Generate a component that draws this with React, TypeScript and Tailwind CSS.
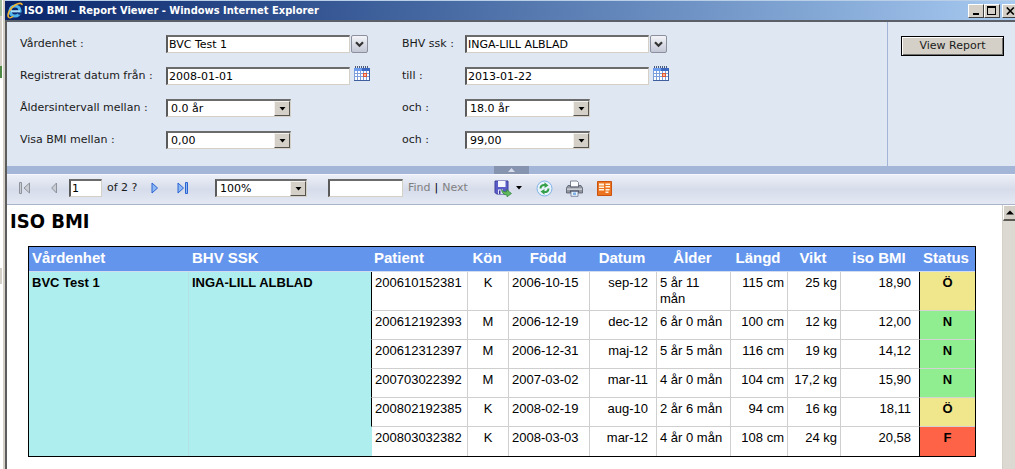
import React, { useState } from "react";

const ui = "font-['DejaVu_Sans',Verdana,sans-serif] text-[11px] leading-[14px] text-[#1a1a1a]";
const sunken =
  "border border-t-2 border-l-2 border-t-[#6b6b6b] border-l-[#5a5a5a] border-r-[#d4d0c8] border-b-[#d4d0c8] bg-white";

type Row = {
  patient: string;
  sex: string;
  born: string;
  date: string;
  age: string;
  length: string;
  weight: string;
  bmi: string;
  status: string;
};

const rows: Row[] = [
  { patient: "200610152381", sex: "K", born: "2006-10-15", date: "sep-12", age: "5 år 11 mån", length: "115 cm", weight: "25 kg", bmi: "18,90", status: "Ö" },
  { patient: "200612192393", sex: "M", born: "2006-12-19", date: "dec-12", age: "6 år 0 mån", length: "100 cm", weight: "12 kg", bmi: "12,00", status: "N" },
  { patient: "200612312397", sex: "M", born: "2006-12-31", date: "maj-12", age: "5 år 5 mån", length: "116 cm", weight: "19 kg", bmi: "14,12", status: "N" },
  { patient: "200703022392", sex: "M", born: "2007-03-02", date: "mar-11", age: "4 år 0 mån", length: "104 cm", weight: "17,2 kg", bmi: "15,90", status: "N" },
  { patient: "200802192385", sex: "K", born: "2008-02-19", date: "aug-10", age: "2 år 6 mån", length: "94 cm", weight: "16 kg", bmi: "18,11", status: "Ö" },
  { patient: "200803032382", sex: "K", born: "2008-03-03", date: "mar-12", age: "4 år 0 mån", length: "108 cm", weight: "24 kg", bmi: "20,58", status: "F" },
];

const statusColor: Record<string, string> = {
  "Ö": "bg-[#f0e68c]",
  N: "bg-[#90ee90]",
  F: "bg-[#ff6347]",
};

function IeLogo() {
  return (
    <svg width="17" height="17" viewBox="0 0 17 17" aria-hidden="true">
      <circle cx="9" cy="9" r="5" fill="none" stroke="#4fb4ee" strokeWidth="3.2" />
      <path d="M5 9.300h9" stroke="#a5dffc" strokeWidth="2.200" />
      <path d="M11 10.600h5v2.400l-3.600-.4z" fill="#16327a" />
      <path d="M2.800 15.500C.5 13 3.800 6 9.500 2.800 13 .8 16.300.8 16 3.200" fill="none" stroke="#f2b632" strokeWidth="1.600" />
      <path d="M2.800 15.500c1 .7 3 0 4.500-1.200" fill="none" stroke="#f2b632" strokeWidth="1.400" />
    </svg>
  );
}

function CalendarIcon() {
  return (
    <svg width="16" height="16" viewBox="0 0 16 16" shapeRendering="crispEdges" aria-hidden="true">
      <path d="M1 0h1v2H1zM3 0h1v2H3zM5 0h1v2H5zM7 0h1v2H7zM9 0h1v2H9zM11 0h1v2h-1zM13 0h1v2h-1z" fill="#4b5a78" />
      <path d="M0 2h16v13H0z" fill="#7d9fdb" />
      <path d="M0 2h16v3H0z" fill="#6d9bee" />
      <path d="M8 2h8v3H8z" fill="#3d68c2" />
      <path d="M1 5h2v2H1zM4 5h2v2H4zM7 5h2v2H7zM10 5h2v2h-2zM13 5h2v2h-2zM1 8h2v2H1zM4 8h2v2H4zM7 8h2v2H7zM13 8h2v2h-2zM1 11h2v3H1zM4 11h2v3H4zM7 11h2v3H7zM10 11h2v3h-2zM13 11h2v3h-2z" fill="#fff" />
      <path d="M9 7h4v4H9z" fill="#e2552d" />
      <path d="M10 8h2v2h-2z" fill="#f7b79c" />
      <path d="M15 4h1v11h-1zM0 14h16v1H0z" fill="#3f5f9e" />
    </svg>
  );
}

function MultiField({ id, label, value }: { id: string; label: string; value: string }) {
  return (
    <>
      <label htmlFor={id}>{label}</label>
      <div className="flex items-center gap-px">
        <input id={id} defaultValue={value} className={`${sunken} h-[18px] w-[184px] px-px text-black outline-none`} />
        <button aria-label={`Välj ${label}`} className="flex h-[18px] w-[17px] items-center justify-center rounded-[2px] border border-[#8c909c] bg-linear-to-b from-[#f4f5f9] to-[#c3c7d6]">
          <svg width="9" height="7" viewBox="0 0 9 7" aria-hidden="true">
            <path d="M1 1.200 4.500 4.700 8 1.200" fill="none" stroke="#333" strokeWidth="2.200" />
          </svg>
        </button>
      </div>
    </>
  );
}

function DateField({ id, label, value }: { id: string; label: string; value: string }) {
  return (
    <>
      <label htmlFor={id}>{label}</label>
      <div className="flex items-center gap-1">
        <input id={id} defaultValue={value} className={`${sunken} h-[18px] w-[184px] px-px text-black outline-none`} />
        <button aria-label="Kalender" className="pb-1">
          <CalendarIcon />
        </button>
      </div>
    </>
  );
}

function Drop({ id, value, className, label }: { id: string; value: string; className: string; label?: string }) {
  return (
    <div className={`relative ${className}`}>
      <select id={id} aria-label={label} className={`${sunken} block h-[18px] w-full appearance-none pl-[3px] text-black outline-none`}>
        <option>{value}</option>
      </select>
      <span className="pointer-events-none absolute top-[2px] right-px flex h-[15px] w-4 items-center justify-center border border-t-[#f4f2ee] border-l-[#f4f2ee] border-r-[#55534e] border-b-[#55534e] bg-[#d4d0c8]">
        <svg width="7" height="4" viewBox="0 0 7 4" aria-hidden="true">
          <path d="M0.500 0h6L3.500 3.500z" fill="#000" />
        </svg>
      </span>
    </div>
  );
}

function SelectField({ id, label, value }: { id: string; label: string; value: string }) {
  return (
    <>
      <label htmlFor={id}>{label}</label>
      <Drop id={id} value={value} className="w-[125px]" />
    </>
  );
}

function TitleBar() {
  const button =
    "flex h-[14px] w-4 items-center justify-center border border-t-white border-l-white border-r-[#404040] border-b-[#404040] bg-[#d4d0c8]";
  return (
    <header className="flex h-5 items-center overflow-hidden border-t border-[#b9cfe8] bg-linear-to-r from-[#0a246a] to-[#a6caf0] pl-px">
      <IeLogo />
      <h1 className="flex-1 pl-px font-['DejaVu_Sans_Condensed','DejaVu_Sans',Tahoma,sans-serif] text-[11px] leading-[14px] font-bold whitespace-nowrap text-white">
        ISO BMI - Report Viewer - Windows Internet Explorer
      </h1>
      <div className="-mr-[3px] flex">
        <button aria-label="Minimera" className={button}>
          <svg width="10" height="9" viewBox="0 0 10 9" shapeRendering="crispEdges"><path d="M2 7h6v2H2z" /></svg>
        </button>
        <button aria-label="Maximera" className={button}>
          <svg width="10" height="9" viewBox="0 0 10 9" shapeRendering="crispEdges"><path d="M0 0h9v9H0zM1 2v6h7V2z" fillRule="evenodd" /></svg>
        </button>
        <button aria-label="Stäng" className={`${button} ml-[2px]`}>
          <svg width="9" height="8" viewBox="0 0 9 8"><path d="M.8.500 7.800 7.500M7.800.500.8 7.500" stroke="#000" strokeWidth="1.600" /></svg>
        </button>
      </div>
    </header>
  );
}

function Parameters() {
  return (
    <section className="flex bg-[#dfe7f2]">
      <div className="grid flex-1 auto-rows-[32px] grid-cols-[146px_236px_63px_1fr] items-center pt-[6px] pb-[10px] pl-[13px]">
        <MultiField id="unit" label="Vårdenhet :" value="BVC Test 1" />
        <MultiField id="nurse" label="BHV ssk :" value="INGA-LILL ALBLAD" />
        <DateField id="from" label="Registrerat datum från :" value="2008-01-01" />
        <DateField id="to" label="till :" value="2013-01-22" />
        <SelectField id="ageMin" label="Åldersintervall mellan :" value="0.0 år" />
        <SelectField id="ageMax" label="och :" value="18.0 år" />
        <SelectField id="bmiMin" label="Visa BMI mellan :" value="0,00" />
        <SelectField id="bmiMax" label="och :" value="99,00" />
      </div>
      <div className="w-32 border-l border-[#a3b5d6] pt-[14px] pl-[13px]">
        <button className="h-5 w-[103px] border border-black bg-[#d4d0c8] shadow-[inset_1px_1px_0_#fff,inset_-1px_-1px_0_#707070]">
          View Report
        </button>
      </div>
    </section>
  );
}

function PageArrow({ label, children, width, className }: { label: string; children: React.ReactNode; width: number; className: string }) {
  return (
    <button aria-label={label} className={className}>
      <svg width={width} height="12" viewBox={`0 0 ${width} 12`}>
        {children}
      </svg>
    </button>
  );
}

function Toolbar() {
  const [page, setPage] = useState("1");
  const gray = { fill: "#c9ccd2", stroke: "#8d929b" };
  const blue = { fill: "#8db9f7", stroke: "#2a62d0" };
  return (
    <div role="toolbar" className="flex h-[31px] items-center border-t border-b border-t-[#f6f8fc] border-b-[#a9b4c8] bg-linear-to-b from-[#eceff7] via-[#d6dcea] via-50% to-[#e4e9f4] pb-[3px] pl-3">
      <PageArrow label="First Page" width={12} className="mr-5">
        <path d="M.500 .500h2v11h-2z" {...gray} />
        <path d="M10.500 1v10L5 6z" {...gray} />
      </PageArrow>
      <PageArrow label="Previous Page" width={7} className="mr-[11px]">
        <path d="M5.500 1v10L.700 6z" {...gray} />
      </PageArrow>
      <input aria-label="Current Page" value={page} onChange={(e) => setPage(e.target.value)} className={`${sunken} h-[18px] w-[33px] px-px text-black outline-none`} />
      <span className="ml-[5px] w-11 whitespace-nowrap">of 2 ?</span>
      <PageArrow label="Next Page" width={8} className="mr-[18px]">
        <path d="M1 1v10L6.500 6z" {...blue} />
      </PageArrow>
      <PageArrow label="Last Page" width={12} className="mr-[26px]">
        <path d="M1 1v10L6.500 6z" {...blue} />
        <path d="M8.500 .500h2v11h-2z" {...blue} />
      </PageArrow>
      <Drop id="zoom" label="Zoom" value="100%" className="w-[92px]" />
      <input aria-label="Find Text in Report" className={`${sunken} ml-[21px] h-[18px] w-[75px] px-px outline-none`} />
      <a href="#find" className="ml-[5px] text-[#808080]">Find</a>
      <span className="mx-1 text-black">|</span>
      <a href="#next" className="w-[52px] text-[#808080]">Next</a>
      <button aria-label="Export" className="mr-[14px] flex items-center gap-1">
        <svg width="18" height="17" viewBox="0 0 18 17">
          <path d="M1 1h13v13H2.500L1 12.500z" fill="#5a5cc8" stroke="#3c3f9c" />
          <path d="M4 1h7.500v6H4z" fill="#f4f6ff" />
          <path d="M4 9.500h5V14H4z" fill="#e4e6f8" />
          <path d="M5 10.500h1.500V14H5z" fill="#3c3f9c" />
          <path d="M7.500 9.500c1.500 2 3 2.500 5 2.300V9.500l5 4-4.500 3.300v-1.900c-3 0-5-1.600-5.500-5.400z" fill="#62b95c" stroke="#2e8238" strokeWidth=".7" />
        </svg>
        <svg width="6" height="4" viewBox="0 0 6 4"><path d="M0 0h6L3 3.500z" /></svg>
      </button>
      <button aria-label="Refresh" className="mr-[13px]">
        <svg width="17" height="17" viewBox="0 0 17 17">
          <circle cx="8.500" cy="8.500" r="7.500" fill="#e8f3fd" stroke="#7fb2e6" />
          <path d="M4.500 8.500C4.500 6 6.500 4.500 9 5" fill="none" stroke="#35a04a" strokeWidth="2" />
          <path d="M8.500 2.300 12.500 5.500 8.500 8z" fill="#35a04a" />
          <path d="M12.500 8.500C12.500 11 10.500 12.500 8 12" fill="none" stroke="#35a04a" strokeWidth="2" />
          <path d="M8.500 14.700 4.500 11.500 8.500 9z" fill="#35a04a" />
        </svg>
      </button>
      <button aria-label="Print" className="mr-[14px]">
        <svg width="17" height="17" viewBox="0 0 17 17">
          <path d="M4.500 1h6.500l1.500 1.500V7h-8z" fill="#fbfcff" stroke="#7e8594" />
          <path d="M2 5.500h2.500V7h8V5.500H15l1.500 2.500v5h-16V8z" fill="#9297a2" stroke="#555b68" strokeWidth=".8" />
          <path d="M1 8.500h15v1.300H1z" fill="#d6d9e0" />
          <path d="M4 10.500h9v2H4z" fill="#454a56" />
          <path d="M5 11.500h7v4.800H5z" fill="#eaf4ff" stroke="#6c7690" strokeWidth=".8" />
          <path d="M7 12.500h3v2.500H7z" fill="#7fb2e6" />
        </svg>
      </button>
      <button aria-label="Data Feed">
        <svg width="15" height="15" viewBox="0 0 15 15">
          <path d="M.500.500h14v14H.500z" fill="#ec7420" stroke="#c9520e" />
          <path d="M2 2.500h5v2H2zM2 5.500h5v1.500H2zM2 8h5v1.500H2zM8.500 2.500h4.500v1.500H8.500zM8.500 5h4.500v1.500H8.500zM8.500 8h4v1.500h-4zM8.500 10.500h3V12h-3z" fill="#fff3e2" />
        </svg>
      </button>
    </div>
  );
}

const body = "border-r border-b border-[#cfcfcf] px-[3px] pt-[3px] pb-[3px] align-top";

function ReportTable() {
  const last = rows.length - 1;
  const edge = (i: number) => (i === last ? "border-b-0" : "");
  return (
    <table className="w-full table-fixed border-separate border-spacing-0 border border-black font-['Liberation_Sans',Arial,sans-serif] text-[13px] leading-4 text-black">
      <colgroup>
        <col className="w-[160px]" />
        <col className="w-[182px]" />
        <col className="w-[97px]" />
        <col className="w-[41px]" />
        <col className="w-[81px]" />
        <col className="w-[67px]" />
        <col className="w-[74px]" />
        <col className="w-[57px]" />
        <col className="w-[53px]" />
        <col className="w-[79px]" />
        <col className="w-[55px]" />
      </colgroup>
      <thead>
        <tr className="h-[25px] bg-[#6495ed] text-left text-[15px] whitespace-nowrap text-white [&>th]:border-b [&>th]:border-[#d3dcf0] [&>th]:pr-[6px] [&>th]:pb-[2px] [&>th]:pl-[3px] [&>th]:font-bold">
          <th>Vårdenhet</th>
          <th>BHV SSK</th>
          <th>Patient</th>
          <th className="text-center">Kön</th>
          <th className="text-center">Född</th>
          <th className="text-center">Datum</th>
          <th className="text-center">Ålder</th>
          <th className="text-center">Längd</th>
          <th className="text-center">Vikt</th>
          <th className="text-center">iso BMI</th>
          <th className="text-center">Status</th>
        </tr>
      </thead>
      <tbody>
        {rows.map((r, i) => (
          <tr key={r.patient} className={i === 0 ? "h-[39px]" : "h-[29px]"}>
            {i === 0 && (
              <>
                <th rowSpan={rows.length} className="border-r border-[#b4e2e2] bg-[#afeeee] px-[3px] pt-[3px] text-left align-top font-bold">BVC Test 1</th>
                <th rowSpan={rows.length} className="bg-[#afeeee] px-[3px] pt-[3px] text-left align-top font-bold">INGA-LILL ALBLAD</th>
              </>
            )}
            <td className={`${body} ${edge(i)} border-l ${i === last ? "border-l-[#afeeee]" : "border-l-black"}`}>{r.patient}</td>
            <td className={`${body} ${edge(i)} text-center`}>{r.sex}</td>
            <td className={`${body} ${edge(i)}`}>{r.born}</td>
            <td className={`${body} ${edge(i)} pr-2 text-right`}>{r.date}</td>
            <td className={`${body} ${edge(i)}`}>{r.age}</td>
            <td className={`${body} ${edge(i)} text-right`}>{r.length}</td>
            <td className={`${body} ${edge(i)} text-right whitespace-nowrap`}>{r.weight}</td>
            <td className={`${body} ${edge(i)} border-r-black pr-2 text-right`}>{r.bmi}</td>
            <td className={`border-b border-[#d3d3d3] pt-[3px] text-center align-top font-bold ${edge(i)} ${statusColor[r.status]}`}>{r.status}</td>
          </tr>
        ))}
      </tbody>
    </table>
  );
}

function WindowEdge() {
  return (
    <div className="flex w-[5px] border-r-2 border-[#d4d0c8] bg-white">
      <div className="w-[2px]">
        <div className="h-4 bg-[#9dbb9a]" />
        <div className="h-[50px] bg-[#d4d0c8]" />
        <div className="h-3 bg-[#4f8a45]" />
        <div className="h-[190px] bg-white" />
        <div className="h-4 bg-[#d4d0c8]" />
      </div>
    </div>
  );
}

export default function App() {
  return (
    <div className={`flex min-h-screen bg-white ${ui}`}>
      <WindowEdge />
      <div className="flex min-w-0 flex-1 flex-col">
        <TitleBar />
        <div className="flex flex-1 flex-col border-t-2 border-l-2 border-t-[#5a5f68] border-l-[#5c5c5c]">
          <Parameters />
          <div className="flex h-2 justify-center bg-[#a4b6d8]">
            <button aria-label="Show / Hide Parameters" className="flex w-[35px] items-center justify-center bg-[#8794b0]">
              <svg width="7" height="4" viewBox="0 0 7 4"><path d="M0 4h7L3.500 0z" fill="#d6dcea" /></svg>
            </button>
          </div>
          <Toolbar />
          <div className="flex flex-1">
            <main className="min-w-0 flex-1 pt-1 pr-[26px] pl-[3px]">
              <h2 className="font-['DejaVu_Sans_Condensed','DejaVu_Sans',Tahoma,sans-serif] text-[20px] leading-6 font-bold text-black">
                ISO BMI
              </h2>
              <div className="mt-[13px] pl-[18px]">
                <ReportTable />
              </div>
            </main>
            <div className="w-[13px] border-l border-[#d4d0c8] bg-[#dcd9d2]">
              <button aria-label="Scroll up" className="flex h-4 w-full items-center justify-center border-t border-b-2 border-l border-t-white border-l-white border-b-[#5c5a55] bg-[#d4d0c8]">
                <svg width="8" height="5" viewBox="0 0 8 5"><path d="M0 4.500h8L4 .500z" /></svg>
              </button>
            </div>
          </div>
        </div>
      </div>
    </div>
  );
}
